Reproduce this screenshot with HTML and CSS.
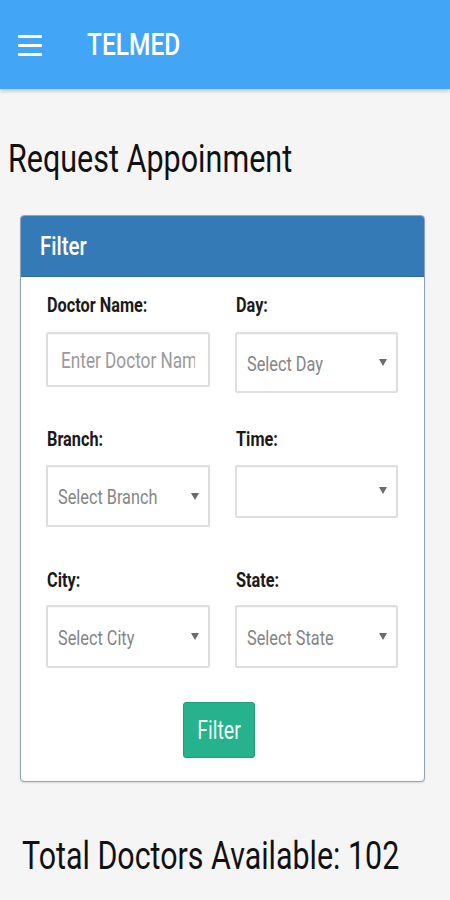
FILE: index.html
```html
<!DOCTYPE html>
<html lang="en">
<head>
<meta charset="utf-8">
<title>TELMED</title>
<link rel="stylesheet" href="styles.css">
</head>
<body>
<header class="appbar">
  <svg class="menu" width="24" height="24" viewBox="0 0 24 24" aria-hidden="true">
    <rect x="0" y="2" width="24" height="3" rx="1" fill="#fff"/>
    <rect x="0" y="11" width="24" height="3" rx="1" fill="#fff"/>
    <rect x="0" y="20" width="24" height="3" rx="1" fill="#fff"/>
  </svg>
  <span class="brand"><span class="t">TELMED</span></span>
</header>
<main class="content">
  <h1 class="page-title"><span class="t">Request Appoinment</span></h1>
  <section class="panel">
    <div class="panel-heading"><span class="t">Filter</span></div>
    <div class="panel-body">
      <div class="row row-1">
        <div class="field">
          <div class="lbl"><span class="t">Doctor Name:</span></div>
          <div class="control text-input"><span class="clip"><span class="t">Enter Doctor Name</span></span></div>
        </div>
        <div class="field">
          <div class="lbl"><span class="t">Day:</span></div>
          <div class="control select h61"><span class="t">Select Day</span><i class="caret"></i></div>
        </div>
      </div>
      <div class="row row-2">
        <div class="field">
          <div class="lbl"><span class="t">Branch:</span></div>
          <div class="control select h62"><span class="t">Select Branch</span><i class="caret"></i></div>
        </div>
        <div class="field">
          <div class="lbl"><span class="t">Time:</span></div>
          <div class="control select h53"><span class="t"></span><i class="caret"></i></div>
        </div>
      </div>
      <div class="row row-3">
        <div class="field">
          <div class="lbl"><span class="t">City:</span></div>
          <div class="control select h63"><span class="t">Select City</span><i class="caret"></i></div>
        </div>
        <div class="field">
          <div class="lbl"><span class="t">State:</span></div>
          <div class="control select h63"><span class="t">Select State</span><i class="caret"></i></div>
        </div>
      </div>
      <div class="actions">
        <button class="btn-filter" type="button"><span class="t">Filter</span></button>
      </div>
    </div>
  </section>
  <h2 class="total"><span class="t">Total Doctors Available: 102</span></h2>
</main>
</body>
</html>
```

FILE: styles.css
```css
* { box-sizing: border-box; }

html, body {
  margin: 0;
  padding: 0;
}

body {
  background: #f5f5f5;
  font-family: Roboto, "Liberation Sans", Arial, sans-serif;
  color: #111;
  width: 450px;
  min-height: 900px;
}

.t {
  display: inline-block;
  transform: scaleY(1.28);
  transform-origin: center;
  white-space: nowrap;
}

/* App bar */
.appbar {
  height: 89px;
  background: #42a5f5;
  display: flex;
  align-items: center;
  padding-left: 18px;
  box-shadow: 0 2px 4px rgba(0, 0, 0, 0.22);
}

.menu {
  display: block;
  flex: none;
}

.brand {
  margin-left: 45px;
  color: #fff;
  font-weight: 500;
  font-size: 24.5px;
  line-height: 30px;
}

/* Content */
.content {
  padding: 0;
}

.page-title {
  margin: 50px 0 0 8px;
  font-weight: 400;
  font-size: 30.5px;
  line-height: 40px;
  color: #111;
}

.panel {
  margin: 36px 0 0 20px;
  width: 405px;
  background: #fff;
  border: 1px solid #8ea4bb;
  border-radius: 4px;
  box-shadow: 0 1px 2px rgba(0, 0, 0, 0.12);
  overflow: hidden;
}

.panel-heading {
  height: 61px;
  background: #337ab7;
  border-bottom: 1px solid #2e6da4;
  color: #fff;
  font-weight: 500;
  font-size: 20.5px;
  line-height: 61px;
  padding-left: 19px;
  display: flex;
  align-items: center;
}

.panel-body {
  padding: 17px 26px 23px 25px;
}

.row {
  display: grid;
  grid-template-columns: 164px 163px;
  column-gap: 25px;
  align-items: start;
}

.row-2 { margin-top: 35px; }
.row-3 { margin-top: 42px; }

.lbl {
  height: 24px;
  line-height: 24px;
  font-size: 16.3px;
  font-weight: 700;
  color: #1a1a1a;
  padding-left: 1px;
}

.row-1 .lbl { margin-bottom: 14px; }
.row-2 .lbl { margin-bottom: 13px; }
.row-3 .lbl { margin-bottom: 12px; }

.control {
  border: 2px solid #dedede;
  border-radius: 2px;
  background: #fff;
  display: flex;
  align-items: center;
  box-shadow: inset 0 1px 1px rgba(0, 0, 0, 0.04);
}

.text-input {
  height: 55px;
  padding: 0 13px;
  font-size: 17.2px;
  color: #9a9a9a;
}

.clip {
  flex: 1;
  overflow: hidden;
  line-height: 30px;
  white-space: nowrap;
}

.select {
  justify-content: space-between;
  padding: 0 9px 0 10px;
  font-size: 16.3px;
  color: #858585;
  line-height: 24px;
}

.select .t {
  margin-top: 4px;
}

.h53 { height: 53px; }
.h53 .caret { margin-top: -2px; }
.h61 { height: 61px; }
.h62 { height: 62px; }
.h63 { height: 63px; }

.caret {
  display: block;
  width: 0;
  height: 0;
  border-left: 4px solid transparent;
  border-right: 4px solid transparent;
  border-top: 7px solid #6a6a6a;
  flex: none;
}

.actions {
  margin-top: 34px;
  display: flex;
  justify-content: center;
  padding-right: 6px;
}

.btn-filter {
  width: 72px;
  height: 56px;
  background: #26b28c;
  border: 1px solid #1f9c79;
  border-radius: 3px;
  color: #eefcf6;
  font-family: Roboto, "Liberation Sans", Arial, sans-serif;
  font-size: 19.5px;
  font-weight: 400;
  padding: 0;
  display: flex;
  align-items: center;
  justify-content: center;
}

.total {
  margin: 54px 0 0 22px;
  font-weight: 400;
  font-size: 30.4px;
  line-height: 40px;
  color: #111;
}
```
